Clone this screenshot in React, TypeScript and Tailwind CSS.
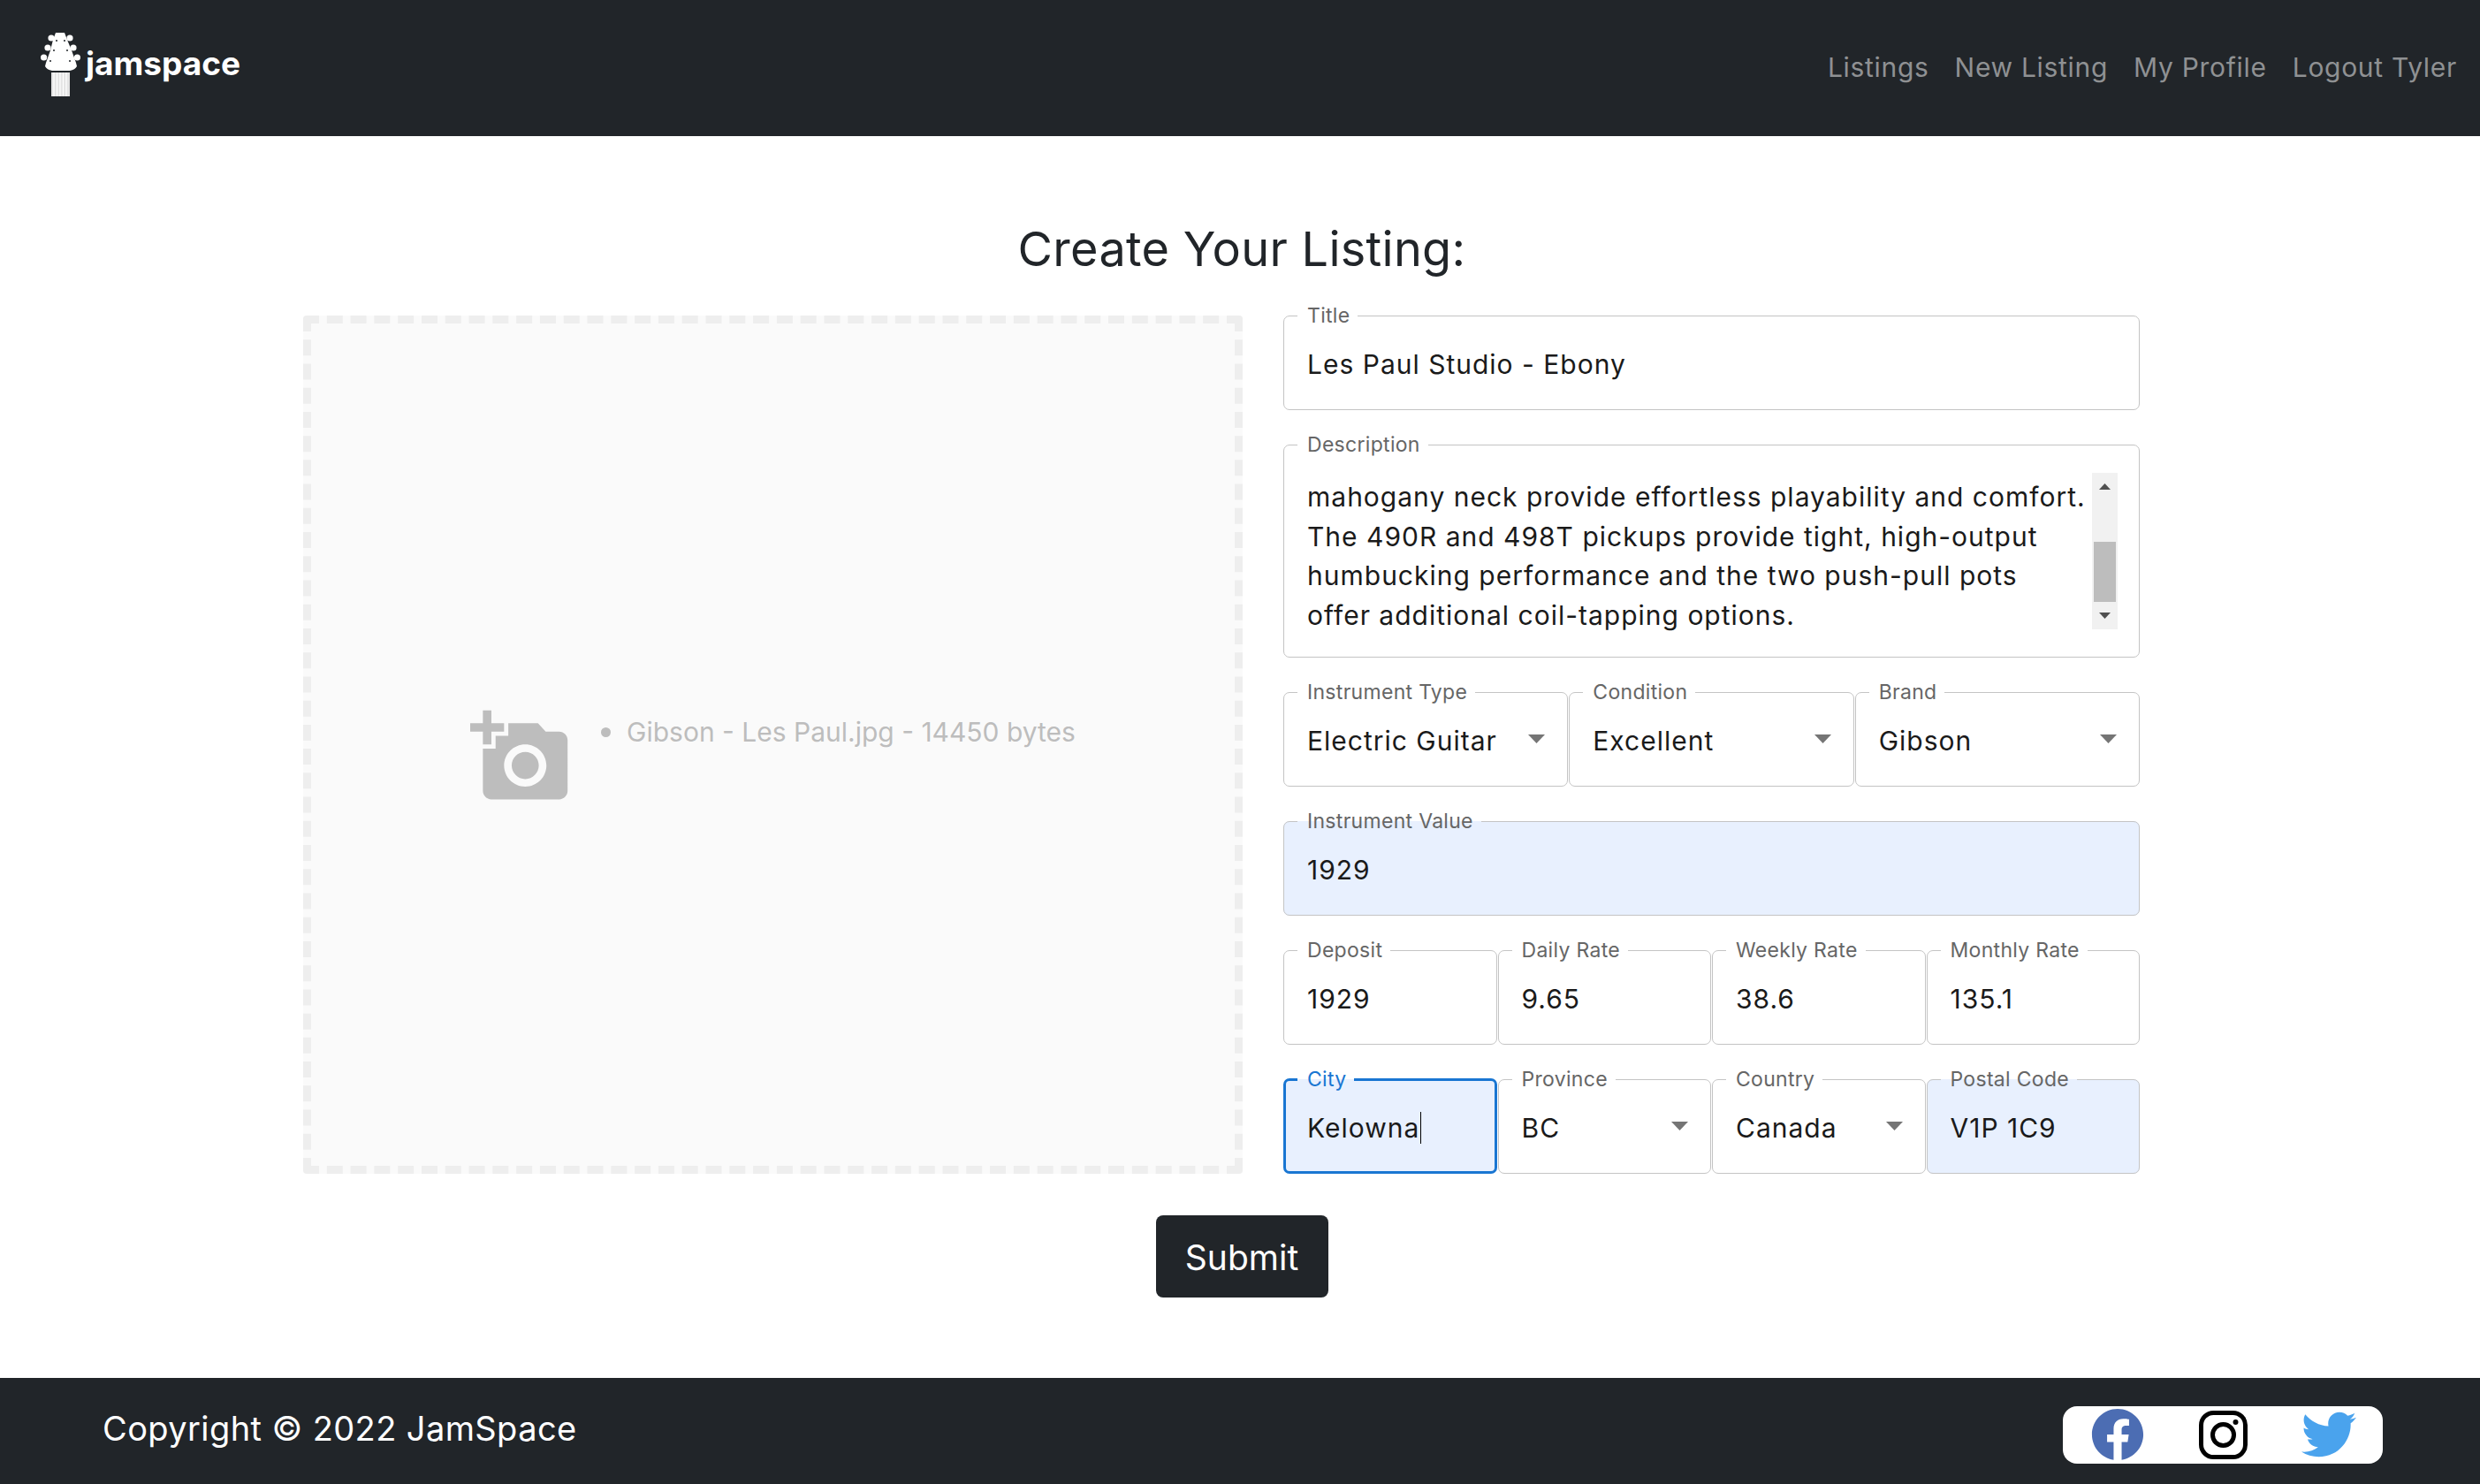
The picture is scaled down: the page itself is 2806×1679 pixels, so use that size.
import { FaFacebook, FaTwitter } from "react-icons/fa";

type FieldProps = {
  label: string;
  value: string;
  select?: boolean;
  filled?: boolean;
  focused?: boolean;
};

function Field({ label, value, select, filled, focused }: FieldProps) {
  return (
    <div className={`relative h-[107px] flex-1 min-w-0 rounded-[7px] ${filled ? "bg-[#e8f0fe]" : ""}`}>
      {/* notched outline */}
      <fieldset
        className={`absolute inset-x-0 top-[-12px] bottom-0 min-w-0 rounded-[7px] pointer-events-none ${
          focused ? "border-[3px] border-[#1976d2]" : "border border-[#c4c4c4]"
        }`}
      >
        <legend className={`invisible h-[24px] px-[10px] text-[23px] leading-[24px] tracking-[0.3px] ${focused ? "ml-[13px]" : "ml-[15px]"}`}>
          {label}
        </legend>
      </fieldset>

      <label
        className={`absolute left-[27px] top-[-12px] h-[24px] text-[23px] leading-[24px] tracking-[0.3px] ${
          focused ? "text-[#1976d2]" : "text-[#666666]"
        }`}
      >
        {label}
      </label>

      <div className="flex h-full items-center pl-[27px] pt-[3px] text-[30px] leading-[44px] tracking-[1px] text-[#1a1a1a]">
        {value}
        {focused && <span className="ml-[1px] h-[36px] w-[1px] bg-black" />}
      </div>

      {select && (
        <svg className="absolute right-[26px] top-[48px] h-[10px] w-[19px]" viewBox="0 0 19 10">
          <path d="M0 0h19L9.5 10z" fill="#757575" />
        </svg>
      )}
    </div>
  );
}

function Logo() {
  return (
    <svg width="46" height="72" viewBox="0 0 46 72" fill="white">
      <path d="M17 0h10l3 8 5 12 5 14 1 4q-2 4-8 5H13q-6-1-8-5l1-4 5-14 3-12z" />
      <circle cx="12" cy="6" r="3.6" />
      <circle cx="33" cy="6" r="3.6" />
      <circle cx="8" cy="17" r="3.6" />
      <circle cx="37" cy="17" r="3.6" />
      <circle cx="3.6" cy="28" r="3.6" />
      <circle cx="41.4" cy="28" r="3.6" />
      <g fill="#212529">
        <circle cx="18" cy="9" r="1" />
        <circle cx="27" cy="9" r="1" />
        <circle cx="15" cy="20" r="1" />
        <circle cx="30" cy="20" r="1" />
        <circle cx="11" cy="32" r="1" />
        <circle cx="33" cy="32" r="1" />
      </g>
      <rect x="12" y="45" width="21" height="27" fill="#e4e4e4" />
      <g stroke="#ffffff" strokeWidth="1.2">
        <path d="M15 45v27M18.5 45v27M22 45v27M25.5 45v27M29 45v27" />
      </g>
    </svg>
  );
}

export default function App() {
  return (
    <div className="flex min-h-screen flex-col bg-white font-['Inter',sans-serif] text-[#212529]">

      {/* NAVBAR */}
      <header className="flex h-[154px] justify-between bg-[#212529] pl-[46px] pr-[26px]">
        <div className="flex h-[146px] items-center gap-[5px] text-white">
          <Logo />
          <span className="mb-[4px] text-[37px] font-bold leading-none">jamspace</span>
        </div>

        <nav className="flex h-[152px] items-center gap-[29px] text-[30px] tracking-[0.7px] text-[#8f9193]">
          <a href="#">Listings</a>
          <a href="#">New Listing</a>
          <a href="#">My Profile</a>
          <a href="#">Logout Tyler</a>
        </nav>
      </header>

      <main className="flex flex-1 flex-col">
        <h1 className="mt-[92px] mb-[39px] pl-[4px] text-center text-[54px] leading-[72px] tracking-[0.3px]">
          Create Your Listing:
        </h1>

        <div className="flex gap-[46px] pl-[343px] pr-[385px]">

          {/* DROPZONE */}
          <div className="flex h-[971px] w-[1063px] items-center justify-center rounded-[4px] border-[9px] border-dashed border-[#eeeeee] bg-[#fafafa] pt-[28px] text-[#bdbdbd]">
            <div className="flex items-start gap-[33px]">
              <svg width="115" height="115" viewBox="0 0 24 24" fill="#bdbdbd">
                <path d="M3 4V1h2v3h3v2H5v3H3V6H0V4h3zm3 6V7h3V4h7l1.83 2H21c1.1 0 2 .9 2 2v12c0 1.1-.9 2-2 2H5c-1.1 0-2-.9-2-2V10h3zm7 9c2.76 0 5-2.24 5-5s-2.24-5-5-5-5 2.24-5 5 2.24 5 5 5zm-3.2-5c0 1.77 1.43 3.2 3.2 3.2s3.2-1.43 3.2-3.2-1.43-3.2-3.2-3.2-3.2 1.43-3.2 3.2z" />
              </svg>
              <ul className="mt-[7px] flex items-center gap-[18px] text-[30px] leading-[44px]">
                <li className="size-[11px] rounded-full bg-[#bdbdbd]" />
                <li>Gibson - Les Paul.jpg - 14450 bytes</li>
              </ul>
            </div>
          </div>

          {/* FORM */}
          <form className="flex min-w-0 flex-1 flex-col gap-[39px]">
            <div className="flex">
              <Field label="Title" value="Les Paul Studio - Ebony" />
            </div>

            {/* DESCRIPTION */}
            <div className="relative h-[241px] rounded-[7px]">
              <fieldset className="absolute inset-x-0 top-[-12px] bottom-0 min-w-0 rounded-[7px] border border-[#c4c4c4]">
                <legend className="invisible ml-[15px] h-[24px] px-[10px] text-[23px] leading-[24px] tracking-[0.3px]">
                  Description
                </legend>
              </fieldset>
              <label className="absolute left-[27px] top-[-12px] h-[24px] text-[23px] leading-[24px] tracking-[0.3px] text-[#666666]">
                Description
              </label>
              <div className="pl-[27px] pt-[37px] text-[30px] leading-[44.6px] tracking-[1px] text-[#1a1a1a]">
                <p>mahogany neck provide effortless playability and comfort.</p>
                <p>The 490R and 498T pickups provide tight, high-output</p>
                <p>humbucking performance and the two push-pull pots</p>
                <p>offer additional coil-tapping options.</p>
              </div>

              {/* scrollbar */}
              <div className="absolute right-[25px] top-[32px] flex h-[177px] w-[29px] flex-col items-center bg-[#f1f1f1]">
                <svg className="mt-[12px] h-[7px] w-[13px]" viewBox="0 0 13 7">
                  <path d="M6.5 0L13 7H0z" fill="#505050" />
                </svg>
                <div className="mt-[59px] h-[68px] w-[25px] bg-[#bdbdbd]" />
                <svg className="mt-[12px] h-[7px] w-[13px]" viewBox="0 0 13 7">
                  <path d="M0 0h13L6.500 7z" fill="#505050" />
                </svg>
              </div>
            </div>

            <div className="flex gap-[1px]">
              <Field label="Instrument Type" value="Electric Guitar" select />
              <Field label="Condition" value="Excellent" select />
              <Field label="Brand" value="Gibson" select />
            </div>

            <div className="flex">
              <Field label="Instrument Value" value="1929" filled />
            </div>

            <div className="flex gap-[1px]">
              <Field label="Deposit" value="1929" />
              <Field label="Daily Rate" value="9.65" />
              <Field label="Weekly Rate" value="38.6" />
              <Field label="Monthly Rate" value="135.1" />
            </div>

            <div className="flex gap-[1px]">
              <Field label="City" value="Kelowna" filled focused />
              <Field label="Province" value="BC" select />
              <Field label="Country" value="Canada" select />
              <Field label="Postal Code" value="V1P 1C9" filled />
            </div>
          </form>
        </div>

        <div className="mt-[47px] mb-[91px] flex justify-center pl-[4px]">
          <button className="h-[93px] w-[195px] rounded-[8px] bg-[#212529] pt-[3px] text-[39px] text-white">
            Submit
          </button>
        </div>
      </main>

      {/* FOOTER */}
      <footer className="flex h-[120px] items-center justify-between bg-[#212529] pl-[116px] pr-[110px] text-[38px] tracking-[0.4px] text-white">
        <span className="mb-[6px]">Copyright © 2022 JamSpace</span>

        <div className="mt-[8px] flex h-[65px] w-[362px] items-center rounded-[16px] bg-white pl-[32px]">
          <FaFacebook className="size-[60px] text-[#4c6db3]" />
          <svg className="ml-[62px] size-[55px]" viewBox="0 0 55 55" fill="none" stroke="black" strokeWidth="5">
            <rect x="2.500" y="2.500" width="50" height="50" rx="14" />
            <circle cx="27.500" cy="27.500" r="12" />
            <circle cx="41.500" cy="13" r="3" fill="black" stroke="none" />
          </svg>
          <FaTwitter className="ml-[61px] size-[62px] text-[#4aa3ed]" />
        </div>
      </footer>
    </div>
  );
}
